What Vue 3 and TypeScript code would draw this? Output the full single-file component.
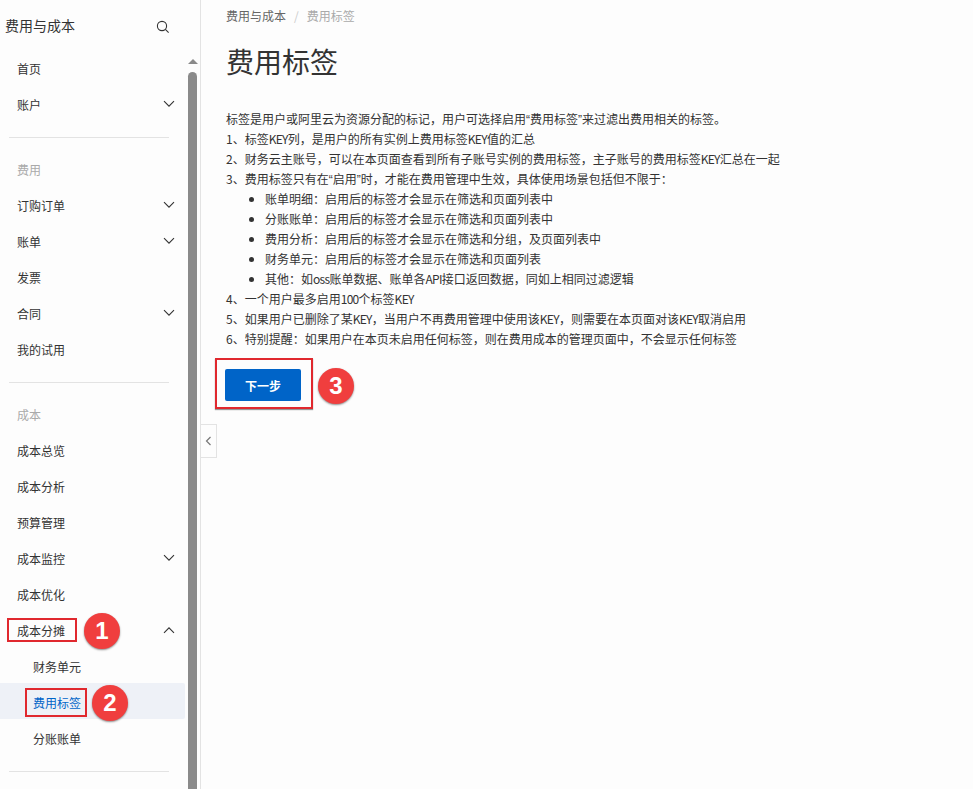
<script setup lang="ts">
type Row = { label: string; arrow?: 'down' | 'up'; kind?: 'group' | 'sub' | 'active'; mark?: number }

const sections: Row[][] = [
  [{ label: '首页' }, { label: '账户', arrow: 'down' }],
  [
    { label: '费用', kind: 'group' },
    { label: '订购订单', arrow: 'down' },
    { label: '账单', arrow: 'down' },
    { label: '发票' },
    { label: '合同', arrow: 'down' },
    { label: '我的试用' },
  ],
  [
    { label: '成本', kind: 'group' },
    { label: '成本总览' },
    { label: '成本分析' },
    { label: '预算管理' },
    { label: '成本监控', arrow: 'down' },
    { label: '成本优化' },
    { label: '成本分摊', arrow: 'up', mark: 1 },
    { label: '财务单元', kind: 'sub' },
    { label: '费用标签', kind: 'active', mark: 2 },
    { label: '分账账单', kind: 'sub' },
  ],
]

const lines = [
  '标签是用户或阿里云为资源分配的标记，用户可选择启用“费用标签”来过滤出费用相关的标签。',
  '1、标签KEY列，是用户的所有实例上费用标签KEY值的汇总',
  '2、财务云主账号，可以在本页面查看到所有子账号实例的费用标签，主子账号的费用标签KEY汇总在一起',
  '3、费用标签只有在“启用”时，才能在费用管理中生效，具体使用场景包括但不限于：',
]

const bullets = [
  '账单明细：启用后的标签才会显示在筛选和页面列表中',
  '分账账单：启用后的标签才会显示在筛选和页面列表中',
  '费用分析：启用后的标签才会显示在筛选和分组，及页面列表中',
  '财务单元：启用后的标签才会显示在筛选和页面列表',
  '其他：如oss账单数据、账单各API接口返回数据，同如上相同过滤逻辑',
]

const tail = [
  '4、一个用户最多启用100个标签KEY',
  '5、如果用户已删除了某KEY，当用户不再费用管理中使用该KEY，则需要在本页面对该KEY取消启用',
  '6、特别提醒：如果用户在本页未启用任何标签，则在费用成本的管理页面中，不会显示任何标签',
]

// quotes and latin runs are narrower in the reference than in the CJK font
const parts = (text: string) =>
  text.split(/([“”]|[A-Za-z0-9]{2,})/).filter(Boolean).map((value) => ({
    value,
    kind: /[“”]/.test(value) ? 'quote' : /^[A-Za-z0-9]{2,}$/.test(value) ? 'latin' : '',
  }))
</script>

<template>
  <div class="page">
    <aside class="sidebar">
      <div class="side-head">
        <span>费用与成本</span>
        <svg class="search" width="14" height="14" viewBox="0 0 14 14" fill="none" stroke="#333" stroke-width="1.1">
          <circle cx="6" cy="6" r="4.6" />
          <path d="M9.4 9.4 L12.6 12.6" />
        </svg>
      </div>

      <div v-for="(section, i) in sections" :key="i" class="section">
        <div
          v-for="row in section"
          :key="row.label"
          class="row"
          :class="row.kind"
        >
          <span class="label" :class="{ marked: row.mark }">{{ row.label }}</span>
          <span v-if="row.mark" class="badge">{{ row.mark }}</span>
          <svg v-if="row.arrow" class="arrow" width="12" height="8" viewBox="0 0 12 8" fill="none" stroke="#333" stroke-width="1.1">
            <path v-if="row.arrow === 'down'" d="M1 1.2 L6 6.2 L11 1.2" />
            <path v-else d="M1 6.8 L6 1.8 L11 6.8" />
          </svg>
        </div>
        <div class="divider"></div>
      </div>

      <div class="scroll-arrow"></div>
      <div class="scroll-thumb"></div>
    </aside>

    <main class="content">
      <div class="crumbs">
        <span>费用与成本</span>
        <span class="slash">/</span>
        <span class="current">费用标签</span>
      </div>
      <h1>费用标签</h1>
      <div class="body">
        <p v-for="line in lines" :key="line"><span v-for="(p, n) in parts(line)" :key="n" :class="p.kind">{{ p.value }}</span></p>
        <ul>
          <li v-for="item in bullets" :key="item"><span v-for="(p, n) in parts(item)" :key="n" :class="p.kind">{{ p.value }}</span></li>
        </ul>
        <p v-for="line in tail" :key="line"><span v-for="(p, n) in parts(line)" :key="n" :class="p.kind">{{ p.value }}</span></p>
      </div>
      <div class="action">
        <div class="button-box">
          <button>下一步</button>
        </div>
        <span class="badge big">3</span>
      </div>
      <div class="collapse">
        <svg width="7" height="10" viewBox="0 0 7 10" fill="none" stroke="#777" stroke-width="1.2">
          <path d="M5.5 1 L1.5 5 L5.5 9" />
        </svg>
      </div>
    </main>
  </div>
</template>

<style>
html,
body {
  margin: 0;
  background: #fdfdfd;
}
</style>

<style scoped>
.page {
  display: flex;
  width: 973px;
  height: 789px;
  overflow: hidden;
  background: #fdfdfd;
  color: #333;
  font-family: "Noto Sans CJK SC", "Liberation Sans", sans-serif;
  font-size: 12px;
}

.sidebar {
  position: relative;
  box-sizing: border-box;
  flex: none;
  width: 201px;
  border-right: 1px solid #e3e3e3;
  overflow: hidden;
}

.side-head {
  display: flex;
  align-items: center;
  justify-content: space-between;
  box-sizing: border-box;
  height: 51px;
  padding: 0 30px 2px 5px;
  font-size: 14px;
}

.search {
  margin-top: 4px;
}

.section {
  width: 185px;
}

.divider {
  width: 160px;
  margin: 14px 0 14px 9px;
  border-top: 1px solid #e3e3e3;
}

.row {
  position: relative;
  display: flex;
  align-items: center;
  box-sizing: border-box;
  height: 36px;
  padding: 0 0 2px 17px;
}

.row.group {
  color: #aaa;
}

.row.sub,
.row.active {
  padding-left: 33px;
}

.row.active {
  z-index: 0;
  color: #0064c8;
}

/* the highlight sits 2px above the text row */
.row.active::before {
  content: "";
  position: absolute;
  top: -2px;
  right: 0;
  bottom: 2px;
  left: 0;
  z-index: -1;
  border-radius: 0 2px 2px 0;
  background: #eef1f7;
}

.label {
  position: relative;
}

.label.marked::after {
  content: "";
  position: absolute;
  top: -4px;
  right: -12px;
  bottom: -3px;
  left: -10px;
  border: 2px solid #e0282e;
}

.active .label.marked::after {
  top: -6px;
  bottom: -6px;
  left: -8px;
  right: -6px;
}

.arrow {
  position: absolute;
  top: 13px;
  left: 163px;
}

.badge {
  position: absolute;
  top: 0;
  left: 84px;
  display: flex;
  align-items: center;
  justify-content: center;
  width: 36px;
  height: 36px;
  border-radius: 50%;
  background: #f03e3e;
  box-shadow: 0 1px 2px rgba(0, 0, 0, 0.45);
  color: #fff;
  font-family: "Liberation Sans", sans-serif;
  font-size: 24px;
  font-weight: 700;
  line-height: 1;
}

.active .badge {
  left: 92px;
}

.scroll-arrow {
  position: absolute;
  top: 59px;
  left: 188px;
  border-right: 5px solid transparent;
  border-bottom: 5px solid #8a8a8a;
  border-left: 5px solid transparent;
}

.scroll-thumb {
  position: absolute;
  top: 72px;
  bottom: 0;
  left: 188px;
  width: 9px;
  border-radius: 5px 5px 0 0;
  background: #8a8a8a;
}

.content {
  position: relative;
  flex: 1;
  padding: 8px 0 0 25px;
}

.crumbs {
  display: flex;
  gap: 8px;
  height: 16px;
  line-height: 16px;
  color: #666;
}

.slash {
  color: #ccc;
}

.current {
  color: #aaa;
}

h1 {
  margin: 17px 0 0;
  color: #333;
  font-size: 28px;
  font-weight: 400;
  line-height: 40px;
}

.body {
  margin-top: 28px;
  line-height: 20px;
}

.quote {
  font-family: "Liberation Sans", sans-serif;
  line-height: 1;
}

.latin {
  letter-spacing: -0.7px;
}

p {
  margin: 0;
}

ul {
  margin: 0;
  padding-left: 39px;
}

.action {
  position: relative;
  display: flex;
  align-items: center;
  margin-top: 9px;
  margin-left: -11px;
}

.button-box {
  box-sizing: border-box;
  width: 98px;
  height: 51px;
  padding: 9px 0 0 8px;
  border: 2px solid #e0282e;
  box-shadow: 0 1px 1px rgba(0, 0, 0, 0.4);
}

button {
  display: block;
  width: 76px;
  height: 32px;
  padding: 0;
  border: 0;
  border-radius: 2px;
  background: #0064c8;
  color: #fff;
  font-family: inherit;
  font-size: 12px;
  font-weight: 700;
}

.badge.big {
  position: static;
  margin: 4px 0 0 5px;
}

.collapse {
  position: absolute;
  top: 424px;
  left: 0;
  display: flex;
  align-items: center;
  justify-content: center;
  box-sizing: border-box;
  width: 16px;
  height: 34px;
  border: 1px solid #e3e3e3;
  border-left: 0;
}
</style>
